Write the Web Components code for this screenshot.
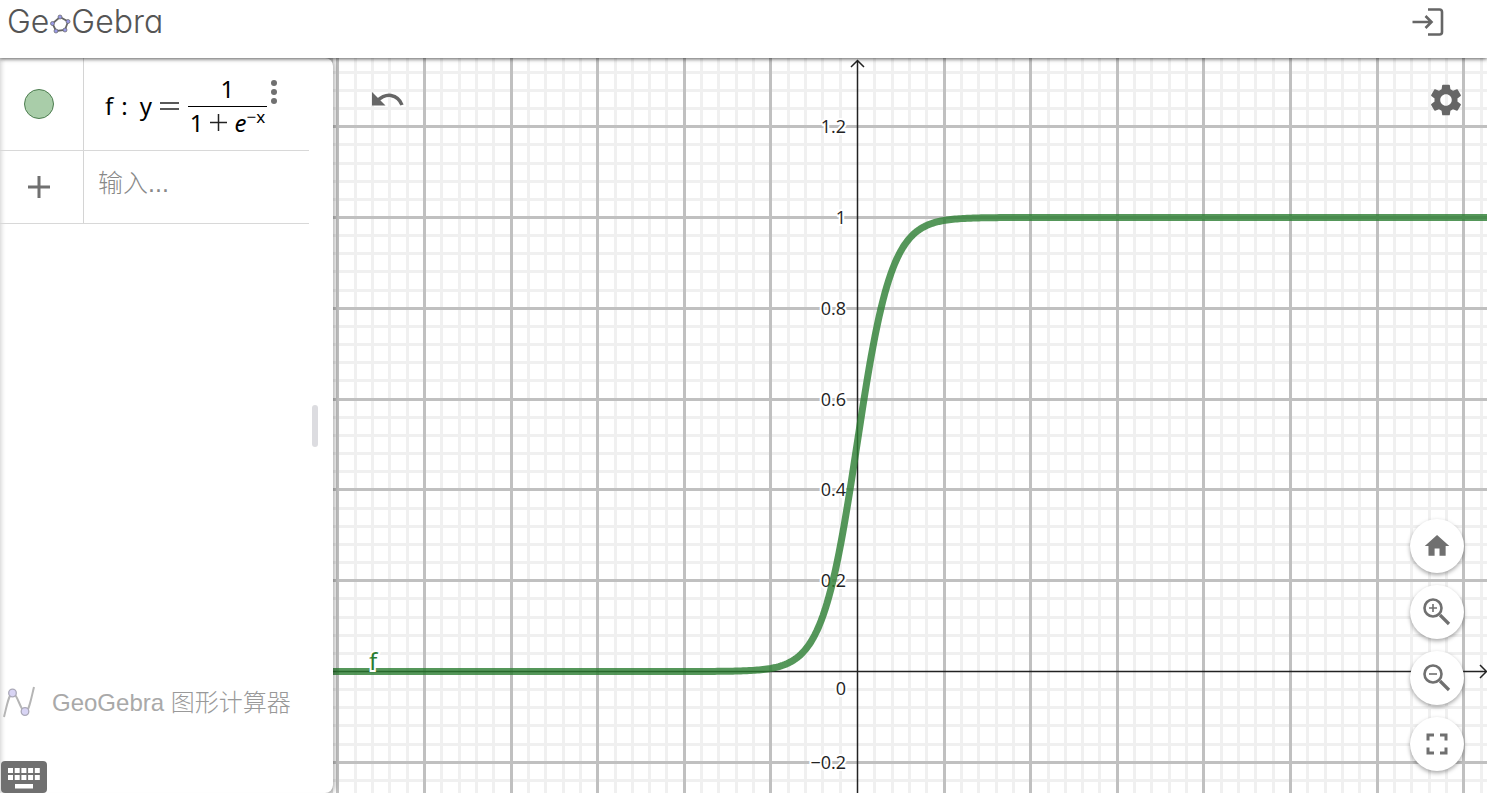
<!DOCTYPE html>
<html lang="zh">
<head>
<meta charset="utf-8">
<title>GeoGebra 图形计算器</title>
<style>
html, body { margin: 0; height: 100%; }
body { font-family: "Liberation Sans", "Noto Sans CJK SC", sans-serif; overflow: hidden; background: #fff; }
</style>
</head>
<body>
<graphing-app></graphing-app>

<template id="t-app">
<style>
:host { display: flex; flex-direction: column; height: 100vh; }
app-header { flex: 0 0 58px; }
main { flex: 1; min-height: 0; display: flex; background: #dcdcdc; }
algebra-panel { flex: 0 0 333px; }
graph-view { flex: 1; min-width: 0; }
</style>
<app-header></app-header>
<main>
  <algebra-panel></algebra-panel>
  <graph-view></graph-view>
</main>
</template>

<template id="t-header">
<style>
:host { display: flex; align-items: flex-start; justify-content: space-between; box-sizing: border-box; padding: 4px 42px 0 7px; background: #fff; position: relative; z-index: 3; box-shadow: 0 1px 4px rgba(0,0,0,.65); }
a { display: flex; align-items: center; color: #555; text-decoration: none; font: 300 32px/36px Inter, sans-serif; font-feature-settings: "cv11"; }
a svg { flex: none; }
button { border: 0; padding: 0; background: none; display: block; height: 36px; }
button svg { display: block; }
</style>
<a href="#" aria-label="GeoGebra"><span>Ge</span><svg width="22" height="26" viewBox="0 0 22 26"><path d="M11 8 19 12.500 16 21 7 22 3.500 14.500Z" fill="none" stroke="#666" stroke-width="1.800"/><g fill="#9999e5" stroke="#666" stroke-width=".7"><circle cx="11" cy="8" r="2"/><circle cx="19" cy="12.500" r="2"/><circle cx="16" cy="21" r="2"/><circle cx="7" cy="22" r="2"/><circle cx="3.500" cy="14.500" r="2"/></g></svg><span>Gebra</span></a>
<button aria-label="登录"><svg width="34" height="36" viewBox="0 0 34 36"><path d="M17 5.500H28.500Q31 5.500 31 8V28Q31 30.500 28.500 30.500H17M1.500 18H20M14.500 12 20.500 18 14.500 24" fill="none" stroke="#666" stroke-width="2.600"/></svg></button>
</template>

<template id="t-algebra">
<style>
:host { display: flex; flex-direction: column; box-sizing: border-box; background: #fff; border-radius: 0 8px 8px 0; position: relative; z-index: 2; box-shadow: 2px 0 5px rgba(0,0,0,.3), inset 5px 0 5px -4px rgba(0,0,0,.2); }
.app { margin-top: auto; display: flex; align-items: center; gap: 15px; height: 36px; padding-left: 3px; color: #a9a9a9; font: 24px/36px "Liberation Sans", sans-serif; }
.app span { white-space: nowrap; }
.app .zh { font-family: "Noto Sans CJK SC", sans-serif; font-weight: 300; color: #999; }
.keys { margin: 41px 0 0 1px; width: 46px; height: 32px; padding: 0; border: 0; background: none; }
.keys svg, .app svg { display: block; flex: none; }
.grip { position: absolute; right: 15px; top: 47%; margin-top: 2px; width: 6px; height: 42px; border-radius: 3px; background: #dcdce0; }
input { width: 180px; border: 0; outline: 0; padding: 0; margin: 0 0 8px 14px; background: none; font: 300 25px/36px "Liberation Sans", "Noto Sans CJK SC", sans-serif; color: #222; }
input::placeholder { color: #888; opacity: 1; }
.dot { width: 30px; height: 30px; box-sizing: border-box; margin: 0 6px 0 0; border: 1px solid #4d7d50; border-radius: 50%; background: #a9cda9; padding: 0; }
.plus { border: 0; padding: 0; margin-right: 6px; background: none; display: block; }
.plus svg, .more svg { display: block; }
.more { border: 0; padding: 0; margin: 0 0 24px 3px; background: none; }
</style>
<algebra-row style="--h: 93px"><button slot="marker" class="dot" aria-label="显示 f"></button><math-formula></math-formula><button class="more" aria-label="更多"><svg width="8" height="26" viewBox="0 0 8 26" fill="#707070"><circle cx="4" cy="4" r="3"/><circle cx="4" cy="13" r="3"/><circle cx="4" cy="22" r="3"/></svg></button></algebra-row>
<algebra-row style="--h: 73px"><button slot="marker" class="plus" aria-label="添加"><svg width="22" height="22" viewBox="0 0 22 22"><path d="M11 0V22M0 11H22" stroke="#707070" stroke-width="3"/></svg></button><input aria-label="输入" placeholder="输入..."></algebra-row>
<div class="grip"></div>
<div class="app"><svg width="34" height="34" viewBox="0 0 34 34"><path d="M1 32C4 20 6 8 10 8S18 27 22 27 28 14 31 2" fill="none" stroke="#b5b5b5" stroke-width="2"/><g fill="#d8d4f4" stroke="#aaa8b8" stroke-width="1.300"><circle cx="9.500" cy="8" r="3.800"/><circle cx="22" cy="26.500" r="3.800"/></g></svg><span>GeoGebra <span class="zh">图形计算器</span></span></div>
<button class="keys" aria-label="键盘"><svg width="46" height="32" viewBox="0 0 46 32"><rect width="46" height="32" rx="4" fill="#707070"/><path d="M7 7h5v5H7zM13.700 7h5v5h-5zM20.400 7h5v5h-5zM27.100 7h5v5h-5zM33.800 7h5v5h-5zM7 14h5v5H7zM13.700 14h5v5h-5zM20.400 14h5v5h-5zM27.100 14h5v5h-5zM33.800 14h5v5h-5zM14 23h18v4.500H14z" fill="#fff"/></svg></button>
</template>

<template id="t-row">
<style>
:host { display: flex; height: var(--h); box-sizing: border-box; border-bottom: 1px solid #d8d8d8; margin-right: 24px; }
.m { flex: 0 0 84px; box-sizing: border-box; border-right: 1px solid #d4d4d4; display: flex; align-items: center; justify-content: center; }
.c { display: flex; align-items: center; min-width: 0; }
</style>
<div class="m"><slot name="marker"></slot></div><div class="c"><slot></slot></div>
</template>

<template id="t-formula">
<style>
:host { display: flex; align-items: center; padding: 4px 0 0 21px; font: 24px/34px "Noto Sans", sans-serif; color: #000; white-space: nowrap; }
.colon { margin: 0 12px 0 8px; }
.frac { display: flex; flex-direction: column; align-items: center; margin-left: 9px; width: 79px; }
.num { line-height: 34px; margin-top: -2px; }
.den { border-top: 1px solid #000; display: flex; align-items: center; justify-content: center; gap: 7px; line-height: 32px; width: 100%; }
.e { display: flex; }
sup { font-size: 17px; line-height: 20px; }
svg { display: block; margin-left: 8px; }
.den svg { margin: 0; }
</style>
<span>f</span><span class="colon">:</span><span>y</span><svg width="19" height="8" viewBox="0 0 19 8"><path d="M0 1H19M0 7H19" stroke="#222" stroke-width="1.500"/></svg>
<div class="frac"><span class="num">1</span><div class="den"><span>1</span><svg width="17" height="17" viewBox="0 0 17 17"><path d="M8.500 0V17M0 8.500H17" stroke="#222" stroke-width="1.500"/></svg><span class="e"><i>e</i><sup>−x</sup></span></div></div>
</template>

<template id="t-graph">
<style>
:host { display: block; position: relative; background: #fff; overflow: hidden; }
.plot { display: block; width: 100%; height: 100%; }
.plot text { font: 18px "Open Sans", sans-serif; fill: #222; stroke: #fff; stroke-width: 4px; paint-order: stroke; text-anchor: end; }
.plot .name { font: 24px "Noto Sans", sans-serif; fill: #2b7d31; text-anchor: start; }
button.flat { position: absolute; border: 0; background: none; padding: 0; }
button svg { display: block; }
.undo { left: 39px; top: 33px; }
.gear { right: 25px; top: 26px; }
.tools { position: absolute; right: 23px; bottom: 22px; display: flex; flex-direction: column; gap: 12px; }
</style>
<svg class="plot" role="img" aria-label="f: y = 1 / (1 + e^-x)"></svg>
<button class="flat undo" aria-label="撤销"><svg width="32" height="18" viewBox="0 0 32 18"><path d="M0 1V14.500H13.500Z" fill="#666"/><path d="M5 10Q12 3.500 19 4.500Q27 6 30 14" fill="none" stroke="#666" stroke-width="3.500"/></svg></button>
<button class="flat gear" aria-label="设置"><svg width="32" height="32" viewBox="2 2 20 20" fill="#666"><path d="M19.140 12.940c.04-.3.060-.61.060-.94 0-.32-.02-.64-.07-.94l2.030-1.580c.18-.14.230-.41.120-.61l-1.920-3.320c-.12-.22-.37-.29-.59-.22l-2.390.960c-.5-.38-1.030-.7-1.620-.94l-.36-2.540c-.04-.24-.24-.41-.48-.41h-3.840c-.24 0-.43.170-.47.410l-.36 2.540c-.59.240-1.130.570-1.620.940l-2.390-.96c-.22-.08-.47 0-.59.220L2.740 8.870c-.12.210-.08.470.120.610l2.030 1.580c-.05.300-.09.630-.09.940s.020.640.070.940l-2.030 1.580c-.18.140-.23.410-.12.610l1.920 3.320c.12.220.370.290.590.220l2.390-.96c.5.380 1.030.700 1.620.940l.36 2.540c.05.240.240.410.480.410h3.840c.24 0 .44-.17.470-.41l.36-2.540c.59-.24 1.130-.56 1.620-.94l2.390.960c.22.080.470 0 .59-.22l1.920-3.320c.12-.22.070-.47-.12-.61l-2.010-1.580zM12 15.600c-1.980 0-3.600-1.620-3.600-3.600s1.620-3.600 3.600-3.600 3.600 1.620 3.600 3.600-1.620 3.600-3.600 3.600z"/></svg></button>
<div class="tools">
<round-button label="主页"><svg width="32" height="32" viewBox="0 0 24 24" fill="#707070"><path d="M10 20v-6h4v6h5v-8h3L12 3 2 12h3v8z" transform="translate(1 1) scale(.92)"/></svg></round-button>
<round-button label="放大"><svg width="32" height="32" viewBox="0 0 32 32" fill="none" stroke="#707070"><circle cx="12" cy="12" r="8.500" stroke-width="2.600"/><path d="M19 19 28 28" stroke-width="3.200"/><path d="M8 12H16M12 8V16" stroke-width="1.600"/></svg></round-button>
<round-button label="缩小"><svg width="32" height="32" viewBox="0 0 32 32" fill="none" stroke="#707070"><circle cx="12" cy="12" r="8.500" stroke-width="2.600"/><path d="M19 19 28 28" stroke-width="3.200"/><path d="M8 12H16" stroke-width="1.600"/></svg></round-button>
<round-button label="全屏"><svg width="32" height="32" viewBox="0 0 32 32" fill="none" stroke="#707070" stroke-width="3"><path d="M7 12.500V7H13M19 7H25V12.500M25 19.500V25H19M13 25H7V19.500"/></svg></round-button>
</div>
</template>

<template id="t-round">
<style>
:host { display: block; }
button { width: 54px; height: 54px; border: 0; padding: 0; border-radius: 50%; background: #fff; box-shadow: 0 2px 4px rgba(0,0,0,.35); display: flex; align-items: center; justify-content: center; }
</style>
<button><slot></slot></button>
</template>

<script>
class Base extends HTMLElement {
  constructor() {
    super();
    this.attachShadow({ mode: "open" }).append(document.getElementById(this.constructor.tpl).content.cloneNode(true));
  }
}
class AppHeader extends Base { static tpl = "t-header"; }
class AlgebraRow extends Base { static tpl = "t-row"; }
class MathFormula extends Base { static tpl = "t-formula"; }
class AlgebraPanel extends Base { static tpl = "t-algebra"; }
class RoundButton extends Base {
  static tpl = "t-round";
  connectedCallback() { this.shadowRoot.querySelector("button").setAttribute("aria-label", this.getAttribute("label")); }
}
class GraphView extends Base {
  static tpl = "t-graph";
  connectedCallback() {
    this.draw();
    new ResizeObserver(() => this.draw()).observe(this);
  }
  draw() {
    const w = this.clientWidth, h = this.clientHeight;
    // Origin, and pixels per major grid step (5 units across, 0.2 up)
    const ox = Math.round(w * 0.454), oy = h - 122, sx = 86.6, sy = 90.8;
    let minor = "", major = "", labels = "";
    for (let i = Math.ceil(-ox / sx * 5); i * sx / 5 < w - ox; i++) {
      const seg = `M${Math.round(ox + i * sx / 5) + .5} 0V${h}`;
      if (i % 5) minor += seg; else if (i) major += seg;
    }
    for (let i = Math.ceil(-oy / sy * 5); i * sy / 5 < h - oy; i++) {
      const seg = `M0 ${Math.round(oy + i * sy / 5) + .5}H${w}`;
      if (i % 5) minor += seg; else if (i) {
        major += seg;
        const v = -i / 25;
        const text = String(Math.round(v * 10) / 10).replace("-", "−");
        labels += `<text x="${ox - 11}" y="${Math.round(oy + i * sy / 5) + 7}">${text}</text>`;
      }
    }
    labels += `<text x="${ox - 11}" y="${oy + 24}">0</text>`;
    let curve = "";
    for (let x = 0; x <= w + 2; x += 2) {
      const t = (x - ox) / sx * 5;
      curve += `${x ? "L" : "M"}${x} ${(oy + .5 - 5 * sy / (1 + Math.exp(-t))).toFixed(2)}`;
    }
    this.shadowRoot.querySelector(".plot").innerHTML =
      `<path d="${minor}" stroke="#c0c0c0" stroke-opacity=".24" stroke-width="3"/>
       <path d="${major}" stroke="#c0c0c0" stroke-width="3"/>
       <path d="M${ox + .5} ${h}V3M${ox - 6} 9L${ox + .5} 2.500L${ox + 7} 9M0 ${oy + .5}H${w - 1}M${w - 7} ${oy - 6}L${w - .5} ${oy + .5}L${w - 7} ${oy + 7}" fill="none" stroke="#222" stroke-width="1.500"/>
       ${labels}
       <path d="${curve}" fill="none" stroke="#2b7d31" stroke-opacity=".8" stroke-width="7" stroke-linejoin="round"/>
       <text class="name" x="36" y="${oy - 1}">f</text>`;
  }
}
class GraphingApp extends Base { static tpl = "t-app"; }
customElements.define("app-header", AppHeader);
customElements.define("algebra-row", AlgebraRow);
customElements.define("math-formula", MathFormula);
customElements.define("algebra-panel", AlgebraPanel);
customElements.define("round-button", RoundButton);
customElements.define("graph-view", GraphView);
customElements.define("graphing-app", GraphingApp);
</script>
</body>
</html>
